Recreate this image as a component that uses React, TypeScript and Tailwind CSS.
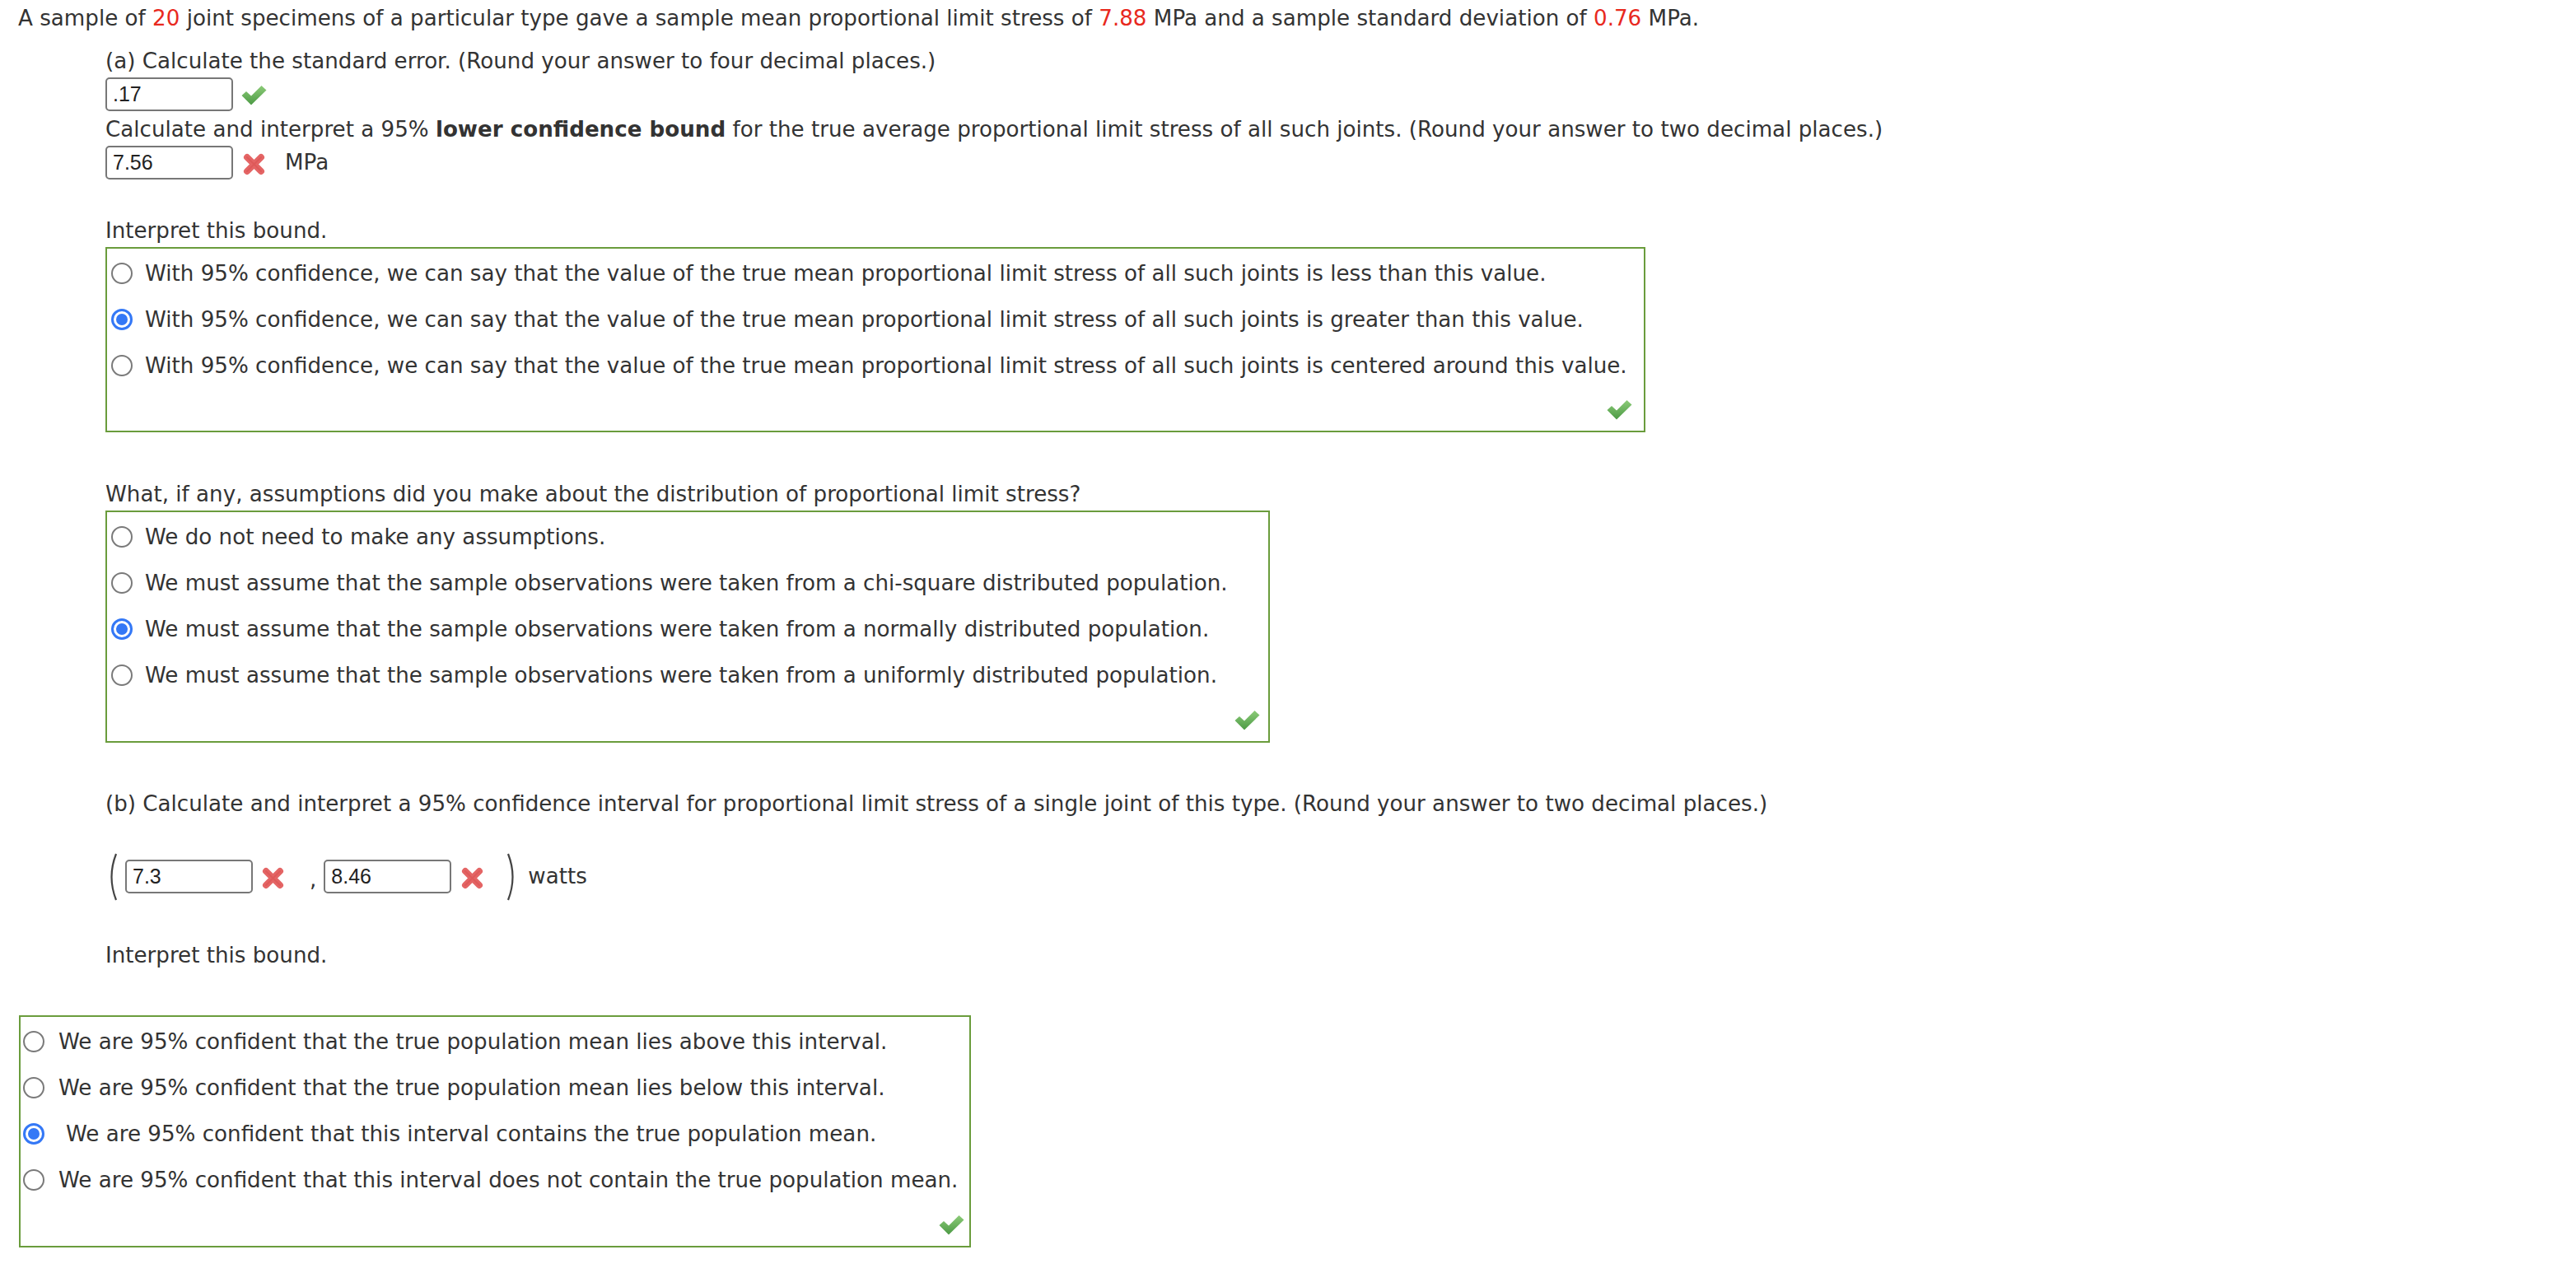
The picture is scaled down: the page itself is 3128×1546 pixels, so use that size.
import React from "react";

function Check() {
  return (
    <svg width="31" height="25" viewBox="0 0 31 25" className="shrink-0">
      <defs>
        <linearGradient id="cg" x1="0" y1="0" x2="0" y2="1">
          <stop offset="0" stopColor="#8ccb78" />
          <stop offset="1" stopColor="#4c9a45" />
        </linearGradient>
      </defs>
      <path d="M0.5 13 L6 8 L12 13.5 L24.5 1 L30.5 6.5 L12 24.5 Z" fill="url(#cg)" />
    </svg>
  );
}

function Cross() {
  return (
    <svg width="27" height="27" viewBox="0 0 27 27" className="shrink-0">
      <path d="M5 5 L22 22 M22 5 L5 22" stroke="#e46565" strokeWidth="8" strokeLinecap="round" />
      <path d="M5 5 L22 22 M22 5 L5 22" stroke="#d84c4c" strokeWidth="2" strokeLinecap="round" opacity="0.45" />
    </svg>
  );
}

function Radio({ checked }: { checked?: boolean }) {
  if (checked) {
    return (
      <div className="w-[26px] h-[26px] rounded-full border-[3px] border-[#3478f6] bg-white flex items-center justify-center shrink-0">
        <div className="w-[14px] h-[14px] rounded-full bg-[#3478f6]" />
      </div>
    );
  }
  return <div className="w-[26px] h-[26px] rounded-full border-2 border-[#7a7a7a] bg-white shrink-0" />;
}

function Field({ value }: { value: string }) {
  return (
    <div className="w-[155px] h-[41px] border-2 border-[#777] rounded-[5px] bg-white flex items-center pl-[7px] font-['Liberation_Sans',sans-serif] text-[25px] text-[#222] shrink-0">
      {value}
    </div>
  );
}

function Option({ text, checked, rl, tl }: { text: string; checked?: boolean; rl: string; tl: string }) {
  return (
    <div className="h-[56px] flex items-center whitespace-nowrap">
      <div className={rl}>
        <Radio checked={checked} />
      </div>
      <span className={tl}>{text}</span>
    </div>
  );
}

function Paren({ right }: { right?: boolean }) {
  return (
    <svg width="16" height="60" viewBox="0 0 16 60" className="shrink-0">
      {right ? (
        <path d="M3 2 Q14 30 3 58" stroke="#444" strokeWidth="2.2" fill="none" />
      ) : (
        <path d="M13 2 Q2 30 13 58" stroke="#444" strokeWidth="2.2" fill="none" />
      )}
    </svg>
  );
}

export default function App() {
  const red = "text-[#e8291e]";
  return (
    <div className="w-[3128px] h-[1546px] bg-white font-['DejaVu_Sans',sans-serif] text-[26.15px] text-[#333] leading-none">
      <div className="h-[44px] pl-[22px] flex items-center whitespace-nowrap">
        <span>
          A sample of <span className={red}>20</span> joint specimens of a particular type gave a sample mean proportional limit stress of{" "}
          <span className={red}>7.88</span> MPa and a sample standard deviation of <span className={red}>0.76</span> MPa.
        </span>
      </div>

      <div className="pl-[128px]">
        <div className="mt-[11px] h-[39px] flex items-center">
          (a) Calculate the standard error. (Round your answer to four decimal places.)
        </div>
        <div className="h-[41px] flex items-center">
          <Field value=".17" />
          <div className="ml-[10px] mt-[2px]">
            <Check />
          </div>
        </div>
        <div className="mt-[2px] h-[40px] flex items-center whitespace-nowrap">
          <span>
            Calculate and interpret a 95% <span className="font-bold">lower confidence bound</span> for the true average proportional limit
            stress of all such joints. (Round your answer to two decimal places.)
          </span>
        </div>
        <div className="h-[41px] flex items-center">
          <Field value="7.56" />
          <div className="ml-[12px] mt-[4px]">
            <Cross />
          </div>
          <span className="ml-[24px]">MPa</span>
        </div>

        <div className="mt-[42px] h-[40px] flex items-center">Interpret this bound.</div>
        <div className="w-[1870px] h-[225px] border-2 border-[#6a9c3c] pt-[2px] flex flex-col">
          <Option rl="ml-[5px]" tl="ml-[15px]" text="With 95% confidence, we can say that the value of the true mean proportional limit stress of all such joints is less than this value." />
          <Option rl="ml-[5px]" tl="ml-[15px]" checked text="With 95% confidence, we can say that the value of the true mean proportional limit stress of all such joints is greater than this value." />
          <Option rl="ml-[5px]" tl="ml-[15px]" text="With 95% confidence, we can say that the value of the true mean proportional limit stress of all such joints is centered around this value." />
          <div className="flex-1 flex items-center justify-end pr-[14px]">
            <Check />
          </div>
        </div>

        <div className="mt-[55px] h-[40px] flex items-center">
          What, if any, assumptions did you make about the distribution of proportional limit stress?
        </div>
        <div className="w-[1414px] h-[282px] border-2 border-[#6a9c3c] pt-[2px] flex flex-col">
          <Option rl="ml-[5px]" tl="ml-[15px]" text="We do not need to make any assumptions." />
          <Option rl="ml-[5px]" tl="ml-[15px]" text="We must assume that the sample observations were taken from a chi-square distributed population." />
          <Option rl="ml-[5px]" tl="ml-[15px]" checked text="We must assume that the sample observations were taken from a normally distributed population." />
          <Option rl="ml-[5px]" tl="ml-[15px]" text="We must assume that the sample observations were taken from a uniformly distributed population." />
          <div className="flex-1 flex items-center justify-end pr-[10px]">
            <Check />
          </div>
        </div>

        <div className="mt-[54px] h-[40px] flex items-center whitespace-nowrap">
          (b) Calculate and interpret a 95% confidence interval for proportional limit stress of a single joint of this type. (Round your answer to two
          decimal places.)
        </div>
        <div className="mt-[48px] h-[41px] flex items-center">
          <Paren />
          <div className="ml-[8px]">
            <Field value="7.3" />
          </div>
          <div className="ml-[11px] mt-[4px]">
            <Cross />
          </div>
          <span className="ml-[31px] mt-[8px]">,</span>
          <div className="ml-[9px]">
            <Field value="8.46" />
          </div>
          <div className="ml-[12px] mt-[4px]">
            <Cross />
          </div>
          <div className="ml-[27px]">
            <Paren right />
          </div>
          <span className="ml-[11px]">watts</span>
        </div>

        <div className="mt-[55px] h-[40px] flex items-center">Interpret this bound.</div>
      </div>

      <div className="ml-[23px] mt-[53px] w-[1156px] h-[282px] border-2 border-[#6a9c3c] pt-[2px] flex flex-col">
        <Option rl="ml-[3px]" tl="ml-[17px]" text="We are 95% confident that the true population mean lies above this interval." />
        <Option rl="ml-[3px]" tl="ml-[17px]" text="We are 95% confident that the true population mean lies below this interval." />
        <Option rl="ml-[3px]" tl="ml-[26px]" checked text="We are 95% confident that this interval contains the true population mean." />
        <Option rl="ml-[3px]" tl="ml-[17px]" text="We are 95% confident that this interval does not contain the true population mean." />
        <div className="flex-1 flex items-center justify-end pr-[6px]">
          <Check />
        </div>
      </div>
    </div>
  );
}
